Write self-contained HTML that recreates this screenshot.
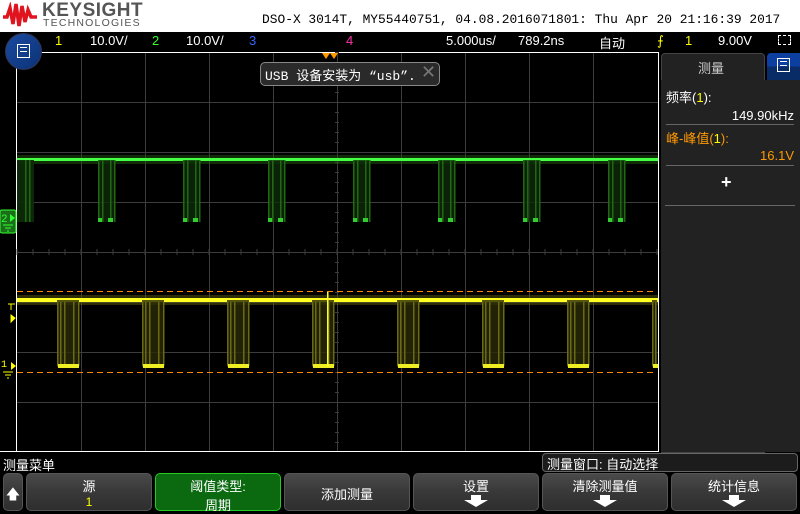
<!DOCTYPE html>
<html><head><meta charset="utf-8"><style>
*{margin:0;padding:0;box-sizing:border-box}
body{width:800px;height:512px;background:#000;overflow:hidden;position:relative;font-family:"Liberation Sans","Noto Sans CJK SC",sans-serif;color:#fff}
.abs{position:absolute}
.mono{font-family:"Liberation Mono","Noto Sans CJK SC",monospace}
.btn{position:absolute;top:473px;height:38px;background:linear-gradient(#4a4a4a,#3a3a3a 45%,#2e2e2e);border:1px solid #555;border-radius:5px;text-align:center;font-size:13px;color:#fff}
.arrow{position:absolute;left:50%;margin-left:-12px;bottom:3px;width:24px;height:12px}
</style></head><body>
<div class="abs" style="left:0;top:0;width:800px;height:32px;background:#fff"></div>
<svg class="abs" style="left:3px;top:2px" width="34" height="26" viewBox="0 0 34 26"><path d="M0 15 L4 15 L7 6 L10 22 L13 2 L16 24 L19 4 L22 20 L25 8 L28 15 L34 15" stroke="#e0141e" stroke-width="3.5" fill="none"/></svg>
<div class="abs" style="left:42px;top:0px;font-size:19px;font-weight:bold;color:#555;letter-spacing:0.5px">KEYSIGHT</div>
<div class="abs" style="left:43px;top:17px;font-size:10.5px;color:#555;letter-spacing:1.2px">TECHNOLOGIES</div>
<div class="abs mono" style="left:262px;top:12px;font-size:12.9px;color:#000;white-space:nowrap">DSO-X 3014T, MY55440751, 04.08.2016071801: Thu Apr 20 21:16:39 2017</div>
<!-- status bar -->
<div class="abs" style="top:33px;left:0;width:800px;height:18px;font-size:13px;white-space:nowrap">
<span class="abs" style="left:55px;color:#ff0">1</span><span class="abs" style="left:90px">10.0V/</span>
<span class="abs" style="left:152px;color:#3f3">2</span><span class="abs" style="left:186px">10.0V/</span>
<span class="abs" style="left:249px;color:#36f">3</span><span class="abs" style="left:346px;color:#f3a">4</span>
<span class="abs" style="left:446px">5.000us/</span><span class="abs" style="left:518px">789.2ns</span>
<span class="abs" style="left:599px">自动</span><span class="abs" style="left:657px;color:#ff0">⨍</span><span class="abs" style="left:685px;color:#ff0">1</span><span class="abs" style="left:718px">9.00V</span>
</div>
<div class="abs" style="left:778px;top:35px;width:13px;height:10px;border:1px dashed #fff"></div>
<svg class="abs" style="left:0;top:32px" width="800" height="420">
<g transform="translate(0,-32)">
<line x1="16.5" y1="52" x2="16.5" y2="452" stroke="#fff"/>
<line x1="16" y1="52.5" x2="659" y2="52.5" stroke="#fff"/>
<line x1="658.5" y1="52" x2="658.5" y2="452" stroke="#fff"/>
<g id="grid" stroke="#3c3c3c"></g>
<g id="tr"></g>
<line x1="17" y1="291.5" x2="657" y2="291.5" stroke="#f80" stroke-dasharray="6,4"/>
<line x1="17" y1="372.5" x2="657" y2="372.5" stroke="#f80" stroke-dasharray="6,4"/>
<path d="M322 53 L330 53 L326 59Z M330 53 L338 53 L334 59Z" fill="#f90"/>
<rect x="0" y="210" width="16" height="23" rx="2" fill="#1a6e1a" stroke="#3f3"/>
<text x="1" y="222" font-size="11" fill="#3f3" font-family="Liberation Mono">2</text>
<path d="M10 214 L15 218 L10 222Z" fill="#3f3"/><path d="M3 225 H13 M5 228 H11 M7 231 H9" stroke="#3f3"/>
<path d="M8 304 H15 M11 304 V310 M11 315 L15 318 L11 322Z" stroke="#ff0" fill="#ff0"/>
<text x="1" y="367" font-size="10" fill="#ff0" font-family="Liberation Mono">1</text>
<path d="M11 362 L16 366 L11 370Z" fill="#ff0"/><path d="M3 372 H13 M5 375 H11 M7 378 H9" stroke="#ff0"/>
</g></svg>
<!-- menu circle -->
<div class="abs" style="left:5px;top:33px;width:37px;height:37px;border-radius:50%;background:linear-gradient(135deg,#1a4aa0,#0b3275);border:1px solid #335"></div>
<div class="abs" style="left:17px;top:44px;width:13px;height:14px;border:1.5px solid #fff"><div style="margin:2px 2px;border-top:1px solid #fff;border-bottom:1px solid #fff;height:5px"></div></div>
<!-- toast -->
<div class="abs mono" style="left:260px;top:62px;width:180px;height:24px;background:#2a2a2a;border:1px solid #888;border-radius:5px;font-size:13px;padding:2px 0 0 4px;white-space:nowrap">USB 设备安装为 “usb”.</div>
<div class="abs" style="left:421px;top:62px;font-size:18px;color:#777">✕</div>
<!-- right panel -->
<div class="abs" style="left:661px;top:53px;width:104px;height:400px;background:#222;border:1px solid #444;border-radius:4px 4px 0 0"></div>
<div class="abs" style="left:661px;top:80px;width:139px;height:372px;background:#222"></div>
<div class="abs" style="left:767px;top:53px;width:33px;height:27px;background:linear-gradient(#0d3fa0 50%,#0a2c66 50%);border-radius:4px 0 0 0"></div>
<div class="abs" style="left:777px;top:58px;width:13px;height:14px;border:1.5px solid #fff"><div style="margin:2px;border-top:1px solid #fff;border-bottom:1px solid #fff;height:5px"></div></div>
<div class="abs" style="left:698px;top:58px;font-size:13px;color:#ccc">测量</div>
<div class="abs" style="left:666px;top:87px;font-size:13px">频率(<span style="color:#ff0">1</span>):</div>
<div class="abs" style="left:700px;top:108px;width:94px;text-align:right;font-size:13px">149.90kHz</div>
<div class="abs" style="left:666px;top:124px;width:128px;border-top:1px solid #666"></div>
<div class="abs" style="left:666px;top:128px;font-size:13px;color:#f90">峰-峰值(<span style="color:#ff0">1</span>):</div>
<div class="abs" style="left:700px;top:148px;width:94px;text-align:right;font-size:13px;color:#f90">16.1V</div>
<div class="abs" style="left:666px;top:165px;width:128px;border-top:1px solid #666"></div>
<div class="abs" style="left:721px;top:172px;font-size:18px;font-weight:bold">+</div>
<div class="abs" style="left:665px;top:205px;width:130px;border-top:1px solid #666"></div>
<!-- bottom -->
<div class="abs" style="left:0;top:451px;width:659px;border-top:1px solid #fff"></div>
<div class="abs" style="left:3px;top:455px;font-size:13px">测量菜单</div>
<div class="abs" style="left:542px;top:453px;width:256px;height:19px;background:#1c1c1c;border:1px solid #666;border-radius:4px;font-size:13px;padding:0 0 0 4px">测量窗口: 自动选择</div>
<div class="btn" style="left:3px;width:20px"><div style="margin-top:10px;font-size:14px">🡅</div></div>
<div class="btn" style="left:26px;width:126px"><div style="margin-top:2px">源</div><div style="color:#ff0;font-size:12px">1</div></div>
<div class="btn" style="left:155px;width:126px;background:#0b6a10;border-color:#2c2"><div style="margin-top:2px">阈值类型:</div><div>周期</div></div>
<div class="btn" style="left:284px;width:126px;padding-top:10px">添加测量</div>
<div class="btn" style="left:413px;width:126px"><div style="margin-top:2px">设置</div><svg class="arrow" viewBox="0 0 24 12"><path d="M7 0H17V5H24L12 12L0 5H7Z" fill="#fff"/></svg></div>
<div class="btn" style="left:542px;width:126px"><div style="margin-top:2px">清除测量值</div><svg class="arrow" viewBox="0 0 24 12"><path d="M7 0H17V5H24L12 12L0 5H7Z" fill="#fff"/></svg></div>
<div class="btn" style="left:671px;width:126px"><div style="margin-top:2px">统计信息</div><svg class="arrow" viewBox="0 0 24 12"><path d="M7 0H17V5H24L12 12L0 5H7Z" fill="#fff"/></svg></div>
<script>
var NS="http://www.w3.org/2000/svg";
function el(p,t,a){var e=document.createElementNS(NS,t);for(var k in a)e.setAttribute(k,a[k]);p.appendChild(e);return e;}
var g=document.getElementById("grid");
for(var i=1;i<10;i++)el(g,"line",{x1:17+64*i+.5,y1:53,x2:17+64*i+.5,y2:451});
for(var j=1;j<8;j++)el(g,"line",{x1:17,y1:52+50*j+.5,x2:658,y2:52+50*j+.5});
for(var x=17;x<658;x+=16)el(g,"line",{x1:x,y1:249,x2:x,y2:255});
for(var y=52;y<452;y+=10)el(g,"line",{x1:335,y1:y+.5,x2:339,y2:y+.5});
var t=document.getElementById("tr");
el(t,"rect",{x:17,y:155,width:641,height:9,fill:"#1f5a10",opacity:.5});
el(t,"rect",{x:17,y:158,width:641,height:3,fill:"#4f4"});
for(var k=-1;k<8;k++){var x0=13+85*k;
 el(t,"rect",{x:Math.max(17,x0),y:160,width:17,height:62,fill:"#0e2a0a",opacity:.8});
 [0,4,12,16].forEach(function(d){if(x0+d>17)el(t,"rect",{x:x0+d,y:160,width:1.5,height:62,fill:"#1f6a10"});});
 if(x0>17){el(t,"rect",{x:x0,y:218,width:4,height:4,fill:"#3c3"});el(t,"rect",{x:x0+10,y:218,width:5,height:4,fill:"#3c3"});}
}
el(t,"rect",{x:17,y:295,width:641,height:10,fill:"#5a5a10",opacity:.5});
el(t,"rect",{x:17,y:298,width:641,height:4,fill:"#ff2"});
for(var k=0;k<8;k++){var x0=57+85*k;
 el(t,"rect",{x:x0,y:300,width:Math.min(22,657-x0),height:67,fill:"#2a2a08",opacity:.8});
 [0,3,7,16,21].forEach(function(d){if(x0+d<657)el(t,"rect",{x:x0+d,y:302,width:1.5,height:64,fill:"#6a6a14"});});
 el(t,"rect",{x:x0+1,y:364,width:Math.min(21,657-x0),height:4,fill:"#ee2"});
}
el(t,"rect",{x:327,y:292,width:1.5,height:75,fill:"#ff2"});
</script>
</body></html>
